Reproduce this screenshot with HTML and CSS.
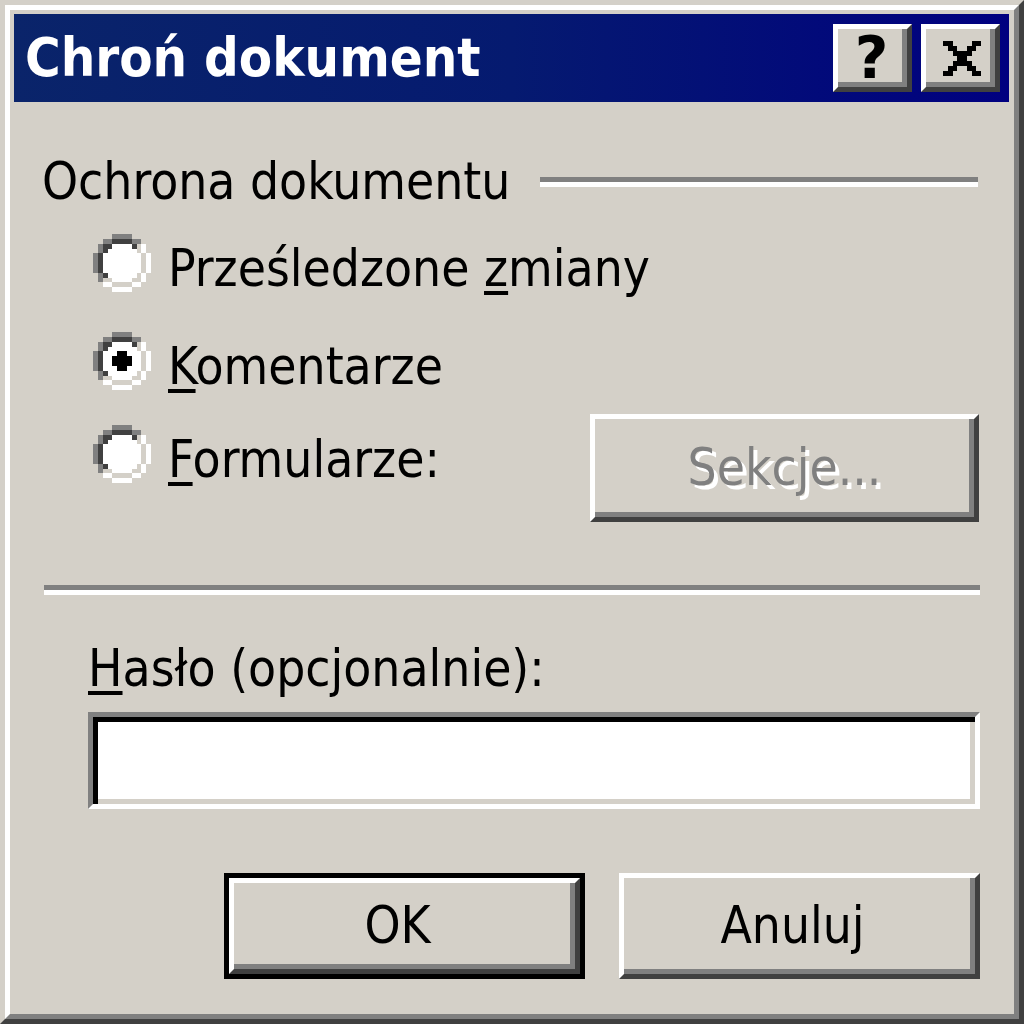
FILE: index.html
```html
<!DOCTYPE html>
<html lang="pl">
<head>
<meta charset="utf-8">
<title>Chroń dokument</title>
<link rel="stylesheet" href="styles.css">
</head>
<body>
<div class="window">
  <div class="frame">
    <div class="titlebar">
      <span class="title">Chroń dokument</span>
      <div class="caption-buttons">
        <div class="cap-btn help"><span>?</span></div>
        <div class="cap-btn close">
          <svg class="close-glyph" viewBox="0 0 8 7" preserveAspectRatio="none" shape-rendering="crispEdges">
            <path fill="#000" d="M0 0h2v1H0z M6 0h2v1H6z M1 1h2v1H1z M5 1h2v1H5z M2 2h4v1H2z M3 3h2v1H3z M2 4h4v1H2z M1 5h2v1H1z M5 5h2v1H5z M0 6h2v1H0z M6 6h2v1H6z"/>
          </svg>
        </div>
      </div>
    </div>

    <div class="body">
      <div class="group-head">
        <span class="group-title">Ochrona dokumentu</span>
        <span class="etched"></span>
      </div>

      <div class="options">
        <div class="opt opt-first">
          <svg class="radio" viewBox="0 0 12 12" shape-rendering="crispEdges">
            <path fill="#808080" d="M4 0h4v1H4z M2 1h2v1H2z M8 1h2v1H8z M1 2h1v2H1z M0 4h1v4H0z M1 8h1v2H1z"/>
            <path fill="#ffffff" d="M10 2h1v2h-1z M11 4h1v4h-1z M10 8h1v2h-1z M2 10h2v1H2z M8 10h2v1H8z M4 11h4v1H4z"/>
            <path fill="#404040" d="M4 1h4v1H4z M2 2h2v1H2z M8 2h1v1H8z M2 3h1v1H2z M1 4h1v4H1z M2 8h1v1H2z"/>
            <path fill="#d4d0c8" d="M9 2h1v1H9z M9 3h1v1H9z M10 4h1v4h-1z M9 8h1v1H9z M2 9h2v1H2z M8 9h2v1H8z M4 10h4v1H4z"/>
            <path fill="#ffffff" d="M4 2h4v1H4z M3 3h6v1H3z M2 4h8v4H2z M3 8h6v1H3z M4 9h4v1H4z"/>
          </svg>
          <span class="opt-label">Prześledzone <u>z</u>miany</span>
        </div>

        <div class="opt opt-second">
          <svg class="radio" viewBox="0 0 12 12" shape-rendering="crispEdges">
            <path fill="#808080" d="M4 0h4v1H4z M2 1h2v1H2z M8 1h2v1H8z M1 2h1v2H1z M0 4h1v4H0z M1 8h1v2H1z"/>
            <path fill="#ffffff" d="M10 2h1v2h-1z M11 4h1v4h-1z M10 8h1v2h-1z M2 10h2v1H2z M8 10h2v1H8z M4 11h4v1H4z"/>
            <path fill="#404040" d="M4 1h4v1H4z M2 2h2v1H2z M8 2h1v1H8z M2 3h1v1H2z M1 4h1v4H1z M2 8h1v1H2z"/>
            <path fill="#d4d0c8" d="M9 2h1v1H9z M9 3h1v1H9z M10 4h1v4h-1z M9 8h1v1H9z M2 9h2v1H2z M8 9h2v1H8z M4 10h4v1H4z"/>
            <path fill="#ffffff" d="M4 2h4v1H4z M3 3h6v1H3z M2 4h8v4H2z M3 8h6v1H3z M4 9h4v1H4z"/>
            <path fill="#000000" d="M5 4h2v1H5z M4 5h4v2H4z M5 7h2v1H5z"/>
          </svg>
          <span class="opt-label"><u>K</u>omentarze</span>
        </div>

        <div class="opt opt-third">
          <svg class="radio" viewBox="0 0 12 12" shape-rendering="crispEdges">
            <path fill="#808080" d="M4 0h4v1H4z M2 1h2v1H2z M8 1h2v1H8z M1 2h1v2H1z M0 4h1v4H0z M1 8h1v2H1z"/>
            <path fill="#ffffff" d="M10 2h1v2h-1z M11 4h1v4h-1z M10 8h1v2h-1z M2 10h2v1H2z M8 10h2v1H8z M4 11h4v1H4z"/>
            <path fill="#404040" d="M4 1h4v1H4z M2 2h2v1H2z M8 2h1v1H8z M2 3h1v1H2z M1 4h1v4H1z M2 8h1v1H2z"/>
            <path fill="#d4d0c8" d="M9 2h1v1H9z M9 3h1v1H9z M10 4h1v4h-1z M9 8h1v1H9z M2 9h2v1H2z M8 9h2v1H8z M4 10h4v1H4z"/>
            <path fill="#ffffff" d="M4 2h4v1H4z M3 3h6v1H3z M2 4h8v4H2z M3 8h6v1H3z M4 9h4v1H4z"/>
          </svg>
          <span class="opt-label"><u>F</u>ormularze:</span>
          <div class="btn btn-sections disabled">Sekcje...</div>
        </div>
      </div>

      <div class="separator"></div>

      <div class="field-label"><u>H</u>asło (opcjonalnie):</div>
      <div class="input"></div>

      <div class="actions">
        <div class="btn-default"><div class="btn">OK</div></div>
        <div class="btn btn-cancel">Anuluj</div>
      </div>
    </div>
  </div>
</div>
</body>
</html>
```

FILE: styles.css
```css
* {
  box-sizing: border-box;
  margin: 0;
  padding: 0;
}

html,
body {
  width: 1024px;
  height: 1024px;
  overflow: hidden;
  background: #d4d0c8;
}

body {
  font-family: "DejaVu Sans Condensed", "DejaVu Sans", sans-serif;
  font-stretch: semi-condensed;
  font-size: 51px;
  line-height: 60px;
  color: #000;
}

u {
  text-decoration: underline;
  text-decoration-thickness: 4px;
  text-underline-offset: 5px;
}

/* window chrome: two-step raised border */
.window {
  width: 1024px;
  height: 1024px;
  border: 5px solid;
  border-color: #d4d0c8 #404040 #404040 #d4d0c8;
  background: #d4d0c8;
}

.frame {
  height: 100%;
  border: 5px solid;
  border-color: #fff #808080 #808080 #fff;
  padding: 4px 5px 0 4px;
  display: flex;
  flex-direction: column;
}

.titlebar {
  flex: none;
  height: 88px;
  background: linear-gradient(90deg, #0a246a 0%, #051a70 50%, #000080 100%);
  display: flex;
  align-items: center;
  justify-content: space-between;
  padding: 0 9px 0 11px;
}

.title {
  color: #fff;
  font-weight: bold;
  font-size: 54px;
  line-height: 88px;
  white-space: nowrap;
}

.caption-buttons {
  display: flex;
  gap: 9px;
}

.cap-btn {
  width: 79px;
  height: 68px;
  background: #d4d0c8;
  border: 5px solid;
  border-color: #fff #404040 #404040 #fff;
  box-shadow: inset -5px -5px 0 #808080;
  display: flex;
  align-items: center;
  justify-content: center;
}

.help span {
  font-family: "DejaVu Sans", sans-serif;
  font-stretch: normal;
  font-weight: bold;
  font-size: 58px;
  line-height: 58px;
  margin: 0 2px 0 0;
}

.close-glyph {
  width: 38px;
  height: 35px;
  display: block;
  margin-left: 2px;
}

/* dialog content */
.body {
  display: flex;
  flex-direction: column;
  padding: 0 29px 0 28px;
}

.group-head {
  margin-top: 50px;
  height: 60px;
  display: flex;
  align-items: center;
}

.group-title {
  white-space: nowrap;
}

.etched {
  flex: 1;
  margin-left: 30px;
  margin-right: 2px;
  height: 10px;
  border-top: 5px solid #808080;
  border-bottom: 5px solid #fff;
}

.options {
  margin-top: 22px;
  padding-left: 51px;
  display: flex;
  flex-direction: column;
}

.opt {
  display: flex;
  align-items: flex-start;
}

.radio {
  flex: none;
  width: 58px;
  height: 58px;
  display: block;
}

.opt-label {
  margin-left: 17px;
  margin-top: 5px;
  white-space: nowrap;
}

.opt-second {
  margin-top: 33px;
}

.opt-third {
  margin-top: 17px;
}

.opt-third .radio {
  margin-top: 11px;
}

.opt-third .opt-label {
  margin-top: 16px;
}

/* push buttons */
.btn {
  height: 106px;
  background: #d4d0c8;
  border: 5px solid;
  border-color: #fff #404040 #404040 #fff;
  box-shadow: inset -5px -5px 0 #808080;
  display: flex;
  align-items: center;
  justify-content: center;
  white-space: nowrap;
}

.btn-sections {
  margin-left: auto;
  margin-right: 1px;
  width: 389px;
  height: 108px;
}

.disabled {
  color: #808080;
  text-shadow: 4px 4px 0 #fff;
}

.separator {
  margin-top: 63px;
  margin-left: 2px;
  height: 10px;
  border-top: 5px solid #808080;
  border-bottom: 5px solid #fff;
}

.field-label {
  margin-top: 44px;
  padding-left: 46px;
  white-space: nowrap;
}

.input {
  margin-top: 13px;
  margin-left: 46px;
  height: 97px;
  background: #fff;
  border: 5px solid;
  border-color: #808080 #fff #fff #808080;
  box-shadow: inset 5px 5px 0 #000, inset -5px -5px 0 #d4d0c8;
}

.actions {
  margin-top: 64px;
  display: flex;
  justify-content: flex-end;
  gap: 34px;
}

.btn-default {
  width: 361px;
  height: 106px;
  border: 5px solid #000;
}

.btn-default .btn {
  height: 100%;
  padding-right: 14px;
}

.btn-cancel {
  width: 361px;
  padding-right: 14px;
}
```
